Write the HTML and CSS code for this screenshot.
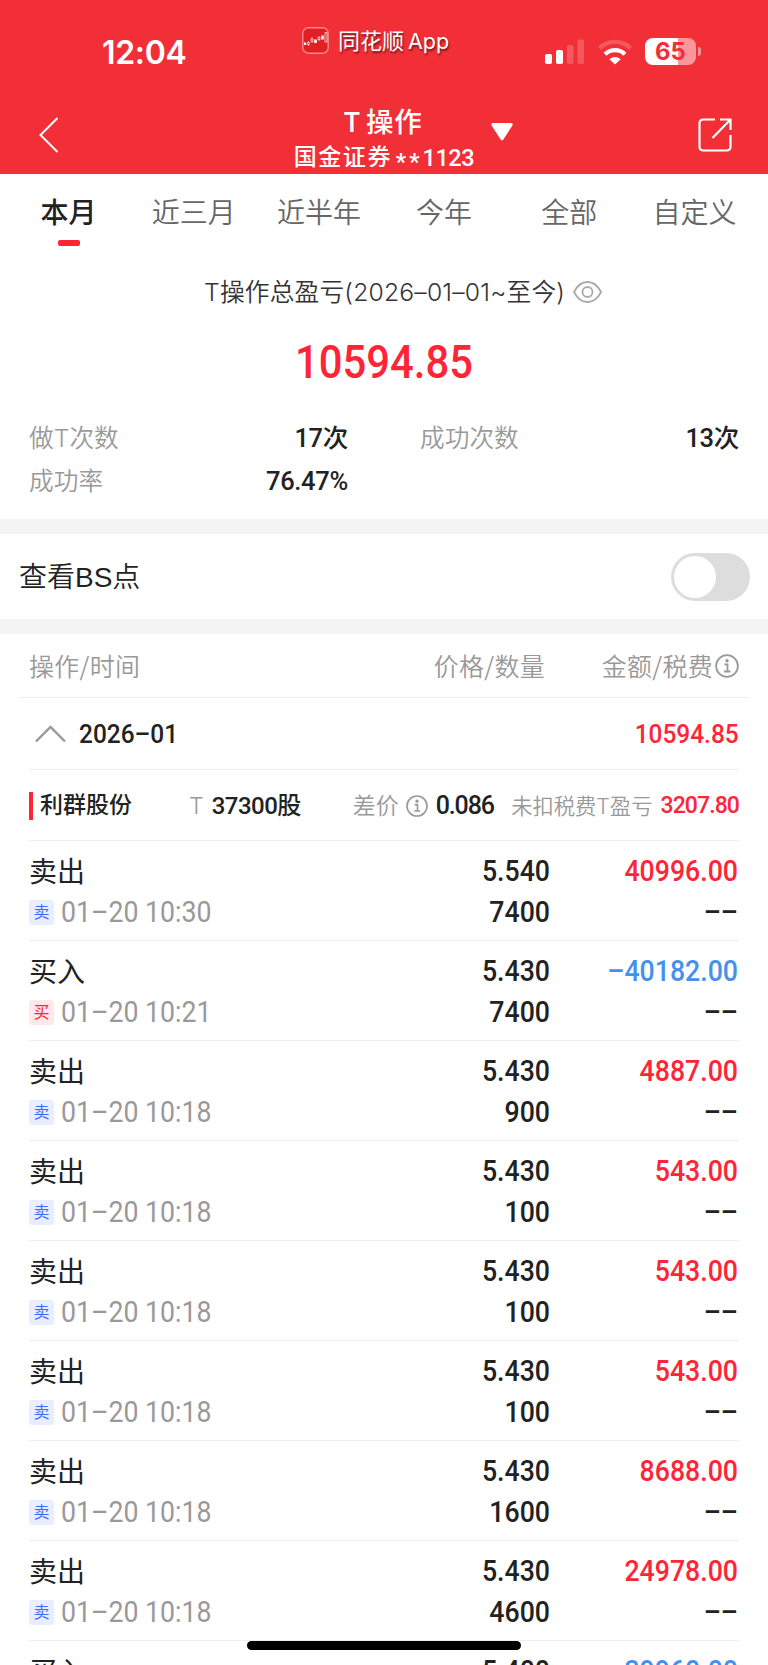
FILE: index.html
```html
<!DOCTYPE html>
<html lang="zh-CN">
<head>
    <meta charset="UTF-8">
    <meta name="viewport" content="width=device-width, initial-scale=1.0">
    <title>T操作</title>
    <link rel="stylesheet" href="styles.css">
</head>
<body>
    <!-- 顶部红色区域 -->
    <header class="header">
        <!-- 状态栏 -->
        <div class="status-bar">
            <div class="clock">12:04</div>
            <div class="app-name">
                <svg class="app-logo" width="27" height="27" viewBox="0 0 27 27">
                    <rect x="0.8" y="0.8" width="25.4" height="25.4" rx="5.5" fill="#e21f22" stroke="#f58a8c" stroke-width="1.4"/>
                    <path d="M6.5 14v5M10 10v6M17 9v5" stroke="#fff" stroke-width="0.6"/>
                    <path d="M2 15.500h2.200v2.500h-2.200zM12.200 12.500h2.600v3.500h-2.600zM19.300 8.500h2.400v4h-2.400z" fill="#fff"/>
                    <path d="M5.600 15.500h1.800v2h-1.800zM9 12h2v2.500h-2zM16 10.500h2v2h-2zM23 5.500h2v9.500h-2z" fill="#e21f22" stroke="#fff" stroke-width="0.7"/>
                </svg>
                <span>同花顺</span><span class="app-en">App</span>
            </div>
            <div class="status-icons">
                <svg width="40" height="26" viewBox="0 0 40 26" fill="#fff">
                    <rect x="0" y="15" width="7" height="10" rx="1.800"/>
                    <rect x="11" y="11" width="7" height="14" rx="1.800"/>
                    <rect x="22" y="6" width="6.500" height="19" rx="1.800" opacity="0.2"/>
                    <rect x="32.500" y="0.500" width="6.500" height="24.500" rx="1.800" opacity="0.2"/>
                </svg>
                <svg width="34" height="26" viewBox="0 0 34 26" fill="none" stroke="#fff" stroke-width="4.200">
                    <path d="M1.500 9.300A22 22 0 0 1 32.500 9.300" opacity="0.2"/>
                    <path d="M7 15.300A14.300 14.300 0 0 1 27 15.300"/>
                    <path d="M11.300 20.300Q17 15.600 22.700 20.300L17 25.600Z" fill="#fff" stroke="none"/>
                </svg>
                <div class="battery"><span>65</span></div>
            </div>
        </div>
        <!-- 导航栏 -->
        <div class="nav-bar">
            <svg class="back" width="20" height="36" viewBox="0 0 20 36" fill="none" stroke="#fff" stroke-width="2">
                <path d="M18.500 1L1.500 18L18.500 35"/>
            </svg>
            <div class="nav-title">
                <div class="title">T<span>操作</span></div>
                <div class="account"><span>国金证券</span><b>**</b>1123</div>
            </div>
            <svg class="arrow" width="22" height="18" viewBox="0 0 22 18">
                <path d="M1.500 0H20.500Q22.300 0.600 21.400 2.500L12.200 16.800Q11 18 9.800 16.800L0.600 2.500Q-0.300 0.600 1.500 0Z" fill="#fff"/>
            </svg>
            <svg class="share" width="34" height="34" viewBox="0 0 34 34" fill="none" stroke="#fff" stroke-width="2.200">
                <path d="M17 1.500H5.500Q1.500 1.500 1.500 5.500V28.500Q1.500 32.500 5.500 32.500H28.500Q32.500 32.500 32.500 28.500V17"/>
                <path d="M22 1.500H32.500V12M32 2L14.500 20"/>
            </svg>
        </div>
    </header>

    <!-- 时间范围 -->
    <nav class="tabs">
        <div class="tab active">本月</div>
        <div class="tab">近三月</div>
        <div class="tab">近半年</div>
        <div class="tab">今年</div>
        <div class="tab">全部</div>
        <div class="tab">自定义</div>
    </nav>

    <!-- 总盈亏 -->
    <section class="summary">
        <div class="summary-title">
            <span class="summary-text">T操作总盈亏(<i>2026–01–01</i>~至今)</span>
            <svg width="29" height="22" viewBox="0 0 29 22" fill="none" stroke="#aaa" stroke-width="1.800">
                <path d="M1 11Q6 1 14.500 1T28 11Q23 21 14.500 21T1 11Z"/>
                <circle cx="14.500" cy="11" r="5"/>
            </svg>
        </div>
        <div class="total">10594.85</div>
        <div class="stats">
            <div class="stat"><span>做T次数</span><b>17次</b></div>
            <div class="stat"><span>成功次数</span><b>13次</b></div>
            <div class="stat"><span>成功率</span><b>76.47%</b></div>
        </div>
    </section>

    <!-- BS点开关 -->
    <section class="bs-row">
        <span>查看BS点</span>
        <div class="switch"></div>
    </section>

    <!-- 操作明细 -->
    <section class="detail">
        <div class="table-head">
            <span>操作/时间</span>
            <span class="right">价格/数量</span>
            <span class="head-amount">金额/税费<svg class="info" width="24" height="24" viewBox="0 0 24 24"><circle cx="12" cy="12" r="10.900"/><path d="M9.500 10.500H12.500V17.500M9 17.500H15.500"/><circle class="dot" cx="12" cy="6.700" r="1.700"/></svg></span>
        </div>
        <div class="month">
            <svg width="31" height="18" viewBox="0 0 31 18" fill="none" stroke="#999" stroke-width="2.400">
                <path d="M1 16.500L15.500 2L30 16.500"/>
            </svg>
            <span>2026<i>–</i>01</span>
            <span class="month-total">10594.85</span>
        </div>
        <div class="stock">
            <b class="stock-name">利群股份</b>
            <span class="stock-t">T</span>
            <b class="stock-count">37300股</b>
            <span class="stock-diff">差价</span>
            <svg class="info" width="22" height="22" viewBox="0 0 24 24"><circle cx="12" cy="12" r="10.900"/><path d="M9.500 10.500H12.500V17.500M9 17.500H15.500"/><circle class="dot" cx="12" cy="6.700" r="1.700"/></svg>
            <b class="stock-price">0.086</b>
            <span class="stock-profit">未扣税费T盈亏</span>
            <b class="stock-money">3207.80</b>
        </div>
        <div class="list" id="list"></div>
    </section>

    <div class="home-bar"></div>

    <script>
        // 成交记录：方向、时间、价格、数量、金额
        const records = [
            ['卖', '10:30', '5.540', '7400', '40996.00'],
            ['买', '10:21', '5.430', '7400', '40182.00'],
            ['卖', '10:18', '5.430', '900', '4887.00'],
            ['卖', '10:18', '5.430', '100', '543.00'],
            ['卖', '10:18', '5.430', '100', '543.00'],
            ['卖', '10:18', '5.430', '100', '543.00'],
            ['卖', '10:18', '5.430', '1600', '8688.00'],
            ['卖', '10:18', '5.430', '4600', '24978.00'],
            ['买', '10:18', '5.400', '7400', '39960.00']
        ];

        // 渲染列表
        document.getElementById('list').innerHTML = records.map(([side, time, price, count, money]) => {
            const isBuy = side === '买';
            return `
            <div class="record ${isBuy ? 'buy' : 'sell'}">
                <div class="name">${isBuy ? '买入' : '卖出'}</div>
                <div class="num">${price}</div>
                <div class="num money">${isBuy ? '<i>–</i>' : ''}${money}</div>
                <div class="time"><span class="tag">${side}</span><span class="date">01<i>–</i>20 ${time}</span></div>
                <div class="num">${count}</div>
                <div class="num"><i>–</i><i>–</i></div>
            </div>`;
        }).join('');
    </script>
</body>
</html>
```
FILE: styles.css
```css
/* 页面基本样式 */
* {
    box-sizing: border-box;
}

body {
    margin: 0;
    height: 1665px;
    overflow: hidden;
    background: #fff;
    color: #222;
    font-family: Roboto, "Noto Sans CJK SC", sans-serif;
    font-size: 25px;
}

i {
    font-style: normal;
}

svg {
    display: block;
    flex: none;
}

/* 顶部 */
.header {
    height: 174px;
    background: #f22f37;
    color: #fff;
}

.status-bar {
    display: flex;
    height: 104px;
}

.clock {
    width: 302px;
    padding-left: 102px;
    font: 600 32px/106px Inter, sans-serif;
    letter-spacing: -0.3px;
}

.app-name {
    display: flex;
    width: 243px;
    padding-top: 27px;
    font: 400 22px/24px "Noto Sans CJK SC", sans-serif;
    text-shadow: 1px 2px 2px rgba(0, 0, 0, 0.5);
}

.app-logo {
    margin-right: 9px;
}

.app-en {
    margin-left: 4px;
    font: 400 21.5px/28px Inter, sans-serif;
}

.status-icons {
    display: flex;
    padding-top: 39px;
}

.status-icons svg + svg {
    margin-left: 13px;
}

/* 电池 */
.battery {
    position: relative;
    width: 51px;
    height: 27px;
    margin: -1px 0 0 13px;
    border-radius: 8px;
    background: linear-gradient(90deg, #fff 65%, #fa979b 65%);
    color: #f22f37;
    font: 700 24px/28px Inter, sans-serif;
    text-align: center;
}

.battery::after {
    content: "";
    position: absolute;
    right: -5px;
    top: 9px;
    width: 3px;
    height: 9px;
    border-radius: 0 4px 4px 0;
    background: #fa979b;
}

/* 导航栏 */
.nav-bar {
    display: flex;
    height: 70px;
    padding-left: 39px;
}

.back {
    margin-top: 13px;
}

.nav-title {
    width: 182px;
    margin-left: 233px;
    text-align: center;
}

.title {
    height: 36px;
    font: 500 27.5px/33px "Noto Sans CJK SC", sans-serif;
    letter-spacing: 0.8px;
    white-space: nowrap;
}

.title span {
    margin-left: 5px;
}

.account {
    display: flex;
    font: 500 23.5px/36px Roboto, "Noto Sans CJK SC", sans-serif;
    letter-spacing: -0.5px;
    white-space: nowrap;
}

.account span {
    width: 107px;
    margin-left: -2px;
    font-size: 23px;
    letter-spacing: 1.6px;
}

.account b {
    padding-top: 4px;
    font-weight: 500;
    letter-spacing: 3px;
}

.arrow {
    margin: 19px 0 0 17px;
}

.share {
    margin: 14px 0 0 185px;
}

/* 时间范围 */
.tabs {
    display: flex;
    height: 87px;
    padding: 0 11px 0 6px;
}

.tab {
    flex: 1;
    color: #666;
    font: 350 28px/74px "Noto Sans CJK SC", sans-serif;
    text-align: center;
}

.tab.active {
    color: #222;
    font-weight: 500;
}

.tab.active::after {
    content: "";
    display: block;
    width: 22px;
    height: 6px;
    margin: -8px auto 0;
    border-radius: 2px;
    background: #ff2436;
}

/* 总盈亏 */
.summary {
    height: 258px;
}

.summary-title {
    display: flex;
    align-items: center;
    height: 62px;
    padding-left: 204px;
    gap: 10px;
}

.summary-text {
    width: 359px;
    color: #333;
    font: 350 24.7px/60px Inter, "Noto Sans CJK SC", sans-serif;
    letter-spacing: 0.2px;
    white-space: nowrap;
}

.total {
    height: 78px;
    color: #ff2436;
    font-size: 47px;
    font-weight: 500;
    line-height: 78px;
    text-align: center;
    transform: scaleX(0.89); /* 数字略微压窄 */
}

.stats {
    display: grid;
    grid-template-columns: 319px 319px;
    column-gap: 72px;
    padding: 16px 29px 0;
}

.stat {
    display: flex;
    justify-content: space-between;
    line-height: 42.5px;
}

.stat span {
    color: #999;
    font-family: Inter, "Noto Sans CJK SC", sans-serif;
    font-size: 24.7px;
    font-weight: 350;
}

.stat b {
    font-size: 25.5px;
    font-weight: 500;
    letter-spacing: -0.3px;
}

/* BS点开关 */
.bs-row {
    display: flex;
    justify-content: space-between;
    align-items: center;
    height: 115px;
    padding: 0 18px 0 19px;
    border-top: 15px solid #f4f4f4;
    border-bottom: 15px solid #f4f4f4;
    font: 400 28px/1 "Liberation Sans", "Noto Sans CJK SC", sans-serif;
}

.bs-row span {
    padding-top: 2px;
    font-weight: 350;
}

.switch {
    width: 79px;
    height: 48px;
    padding: 3px;
    border-radius: 24px;
    background: #ddd;
}

.switch::before {
    content: "";
    display: block;
    width: 42px;
    height: 42px;
    border-radius: 50%;
    background: #fff;
}

/* 表头 */
.table-head {
    display: grid;
    grid-template-columns: 200px 316px 194px;
    height: 64px;
    margin: 0 18px;
    padding-left: 11px;
    border-bottom: 1px solid #eee;
    color: #999;
    font: 350 25px/63px "Noto Sans CJK SC", sans-serif;
    letter-spacing: 0.3px;
}

.right {
    text-align: right;
}

.head-amount {
    display: flex;
    justify-content: flex-end;
    align-items: center;
    gap: 2px;
}

.info {
    fill: none;
    stroke: #999;
    stroke-width: 1.8;
}

.info .dot {
    fill: #999;
    stroke: none;
}

/* 月份 */
.month {
    display: flex;
    align-items: center;
    height: 72px;
    margin: 0 29px;
    padding-left: 6px;
    border-bottom: 1px solid #eee;
    font-size: 26px;
    font-weight: 500;
}

.month span {
    margin-left: 13px;
    transform: scaleX(0.94);
    transform-origin: left;
}

.month .month-total {
    margin-left: auto;
    color: #ff2436;
    transform-origin: right;
}

/* 股票 */
.stock {
    display: flex;
    align-items: center;
    height: 71px;
    margin: 0 29px;
    padding-top: 1px;
    border-bottom: 1px solid #eee;
    font-size: 25px;
    line-height: 28px;
    white-space: nowrap;
}

.stock b {
    font-weight: 500;
}

.stock-name {
    width: 160px;
    padding-left: 7px;
    border-left: 4px solid #ff2436;
    font-size: 23px;
}

.stock-t,
.stock-diff,
.stock-profit {
    color: #999;
    font-family: Inter, "Noto Sans CJK SC", sans-serif;
    font-size: 23px;
    font-weight: 350;
}

.stock-count {
    width: 141px;
    margin-left: 8px;
    font-size: 24px;
    line-height: 24px;
    letter-spacing: -0.5px;
}

.stock .info {
    margin: 0 8px 0 7px;
}

.stock-price {
    letter-spacing: -1.1px;
}

.stock-profit {
    margin-left: auto;
    font-size: 21.3px;
}

.stock .stock-money {
    margin-left: 8px;
    color: #ff2436;
    font-size: 23px;
    letter-spacing: -0.9px;
}

/* 成交记录 */
.record {
    display: grid;
    grid-template-columns: 300px 221px 188px;
    grid-template-rows: 41px 41px;
    height: 100px;
    margin: 0 29px;
    padding-top: 10px;
    border-bottom: 1px solid #eee;
    line-height: 41px;
}

.name {
    font: 400 28px/38px "Noto Sans CJK SC", sans-serif;
}

.num {
    font-size: 29px;
    font-weight: 500;
    text-align: right;
    transform: scaleX(0.92);
    transform-origin: right;
}

.sell .money {
    color: #ff2436;
}

.buy .money {
    color: #4590ee;
}

.time {
    display: flex;
    align-items: center;
    gap: 7px;
    color: #999;
    font-size: 29px;
}

.date {
    transform: scaleX(0.92);
    transform-origin: left;
}

/* 买卖标签 */
.tag {
    width: 25px;
    height: 25px;
    border-radius: 3px;
    background: #e8eeff;
    color: #3d6bff;
    font: 400 16px/23px "Noto Sans CJK SC", sans-serif;
    text-align: center;
}

.buy .tag {
    background: #ffe8ea;
    color: #ff2436;
}

/* 底部横条 */
.home-bar {
    position: absolute;
    left: 247px;
    top: 1641px;
    width: 274px;
    height: 9px;
    border-radius: 5px;
    background: #000;
}
```
